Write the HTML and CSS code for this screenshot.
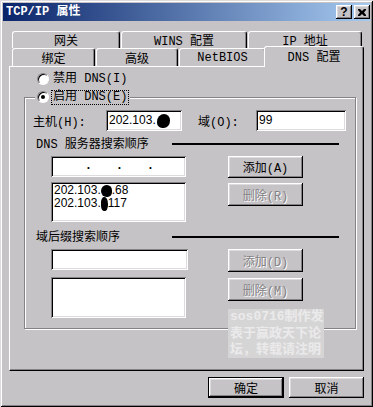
FILE: index.html
```html
<!DOCTYPE html>
<html lang="zh-CN">
<head>
    <meta charset="UTF-8">
    <title>TCP/IP 属性</title>
    <link rel="stylesheet" href="styles.css">
</head>
<body>
    <div class="dialog">
        <div class="titlebar">
            <span class="title">TCP/IP 属性</span>
            <div class="caption-btns">
                <span class="cap-btn">?</span>
                <span class="cap-btn">
                    <svg width="8" height="7" viewBox="0 0 8 7"><path d="M0 0h2l2 2 2-2h2v1l-2 2.5 2 2.5v1h-2l-2-2-2 2h-2v-1l2-2.5-2-2.5z" fill="#000"/></svg>
                </span>
            </div>
        </div>

        <div class="tabs">
            <div class="tab-row">
                <div class="tab w-gw">网关</div>
                <div class="tab w-wins">WINS 配置</div>
                <div class="tab w-ip">IP 地址</div>
            </div>
            <div class="tab-row front">
                <div class="tab w-bind">绑定</div>
                <div class="tab w-adv">高级</div>
                <div class="tab w-nb">NetBIOS</div>
                <div class="tab selected">DNS 配置</div>
            </div>
        </div>

        <div class="panel">
            <div class="radio-row first">
                <span class="radio"></span>
                <span class="radio-text">禁用 DNS(I)</span>
            </div>

            <fieldset class="group">
                <legend class="radio-row">
                    <span class="radio checked"></span>
                    <span class="radio-text focus">启用 DNS(E)</span>
                </legend>

                <div class="host-row">
                    <span class="lbl-host">主机(H):</span>
                    <div class="field w-host">202.103.<span class="blob big"></span></div>
                    <span class="lbl-domain">域(O):</span>
                    <div class="field w-domain">99</div>
                </div>

                <div class="section-head">
                    <span class="head-text">DNS 服务器搜索顺序</span>
                    <span class="rule"></span>
                </div>
                <div class="order-row">
                    <div class="order-col">
                        <div class="field ip-field"><span>.</span><span>.</span><span>.</span></div>
                        <div class="field listbox">
                            <div>202.103.<span class="blob b1"></span>.68</div>
                            <div>202.103.<span class="blob b2"></span>117</div>
                        </div>
                    </div>
                    <div class="btn-col">
                        <div class="btn h22">添加(A)</div>
                        <div class="btn h23 disabled">删除(R)</div>
                    </div>
                </div>

                <div class="section-head second">
                    <span class="head-text">域后缀搜索顺序</span>
                    <span class="rule"></span>
                </div>
                <div class="order-row suffix">
                    <div class="order-col">
                        <div class="field suffix-field"></div>
                        <div class="field listbox tall"></div>
                    </div>
                    <div class="btn-col">
                        <div class="btn h23 disabled">添加(D)</div>
                        <div class="btn h23 disabled">删除(M)</div>
                    </div>
                </div>
            </fieldset>

            <!-- watermark stamped over the dialog -->
            <div class="watermark">sos0716制作发<br>表于赢政天下论<br>坛，转载请注明</div>
        </div>

        <div class="footer">
            <div class="btn default">确定</div>
            <div class="btn cancel">取消</div>
        </div>
    </div>
</body>
</html>
```

FILE: styles.css
```css
* {
    box-sizing: border-box;
}
body {
    margin: 0;
    background: #c6c3c6;
    font-family: "Liberation Mono", "Noto Sans CJK SC", monospace;
    font-size: 12px;
    color: #000;
}
.dialog {
    width: 373px;
    height: 407px;
    padding: 3px;
    background: #c6c3c6;
    box-shadow: inset 1px 1px #dedbde, inset -1px -1px #000, inset 2px 2px #fff, inset -2px -2px #848284;
}

/* title bar */
.titlebar {
    height: 18px;
    display: flex;
    align-items: center;
    justify-content: space-between;
    padding-left: 3px;
    background: linear-gradient(to right, #0a246a, #a6caf0);
}
.title {
    color: #fff;
    font-weight: bold;
    line-height: 18px;
}
.caption-btns {
    display: flex;
    gap: 2px;
}
.cap-btn {
    width: 16px;
    height: 14px;
    display: flex;
    align-items: center;
    justify-content: center;
    background: #c6c3c6;
    font-family: "Liberation Sans", sans-serif;
    font-weight: bold;
    font-size: 12px;
    line-height: 14px;
    box-shadow: inset -1px -1px #000, inset 1px 1px #fff, inset -2px -2px #848284, inset 2px 2px #dedbde;
}

/* tabs */
.tabs {
    margin: 10px 0 0 9px;
}
.tab-row {
    display: flex;
    gap: 1px;
    height: 17px;
}
.tab-row.front {
    height: 18px;
}
.tab {
    height: 17px;
    display: flex;
    align-items: center;
    justify-content: center;
    background: #c6c3c6;
    border-top: 1px solid #fff;
    border-left: 1px solid #fff;
    border-right: 1px solid #000;
    border-radius: 3px 3px 0 0;
    box-shadow: inset -1px 0 #848284;
}
.front .tab {
    height: 18px;
}
.w-gw { width: 108px; }
.w-wins { width: 126px; }
.w-ip { width: 114px; }
.w-bind { width: 83px; }
.w-adv { width: 82px; }
.w-nb { width: 87px; }
.front .tab.selected {
    position: relative;
    z-index: 1;
    width: 100px;
    height: 21px;
    margin: -2px 0 0 -3px;
    padding-bottom: 3px;
}

/* page panel */
.panel {
    position: relative;
    width: 355px;
    height: 305px;
    margin-left: 6px;
    border-top: 1px solid #fff;
    border-left: 1px solid #fff;
    border-right: 1px solid #000;
    border-bottom: 1px solid #000;
    box-shadow: inset -1px -1px #848284;
}
.radio-row {
    display: flex;
    align-items: center;
    height: 14px;
}
.radio-row.first {
    margin: 5px 0 0 27px;
}
.radio {
    position: relative;
    width: 12px;
    height: 12px;
    border-radius: 50%;
    background: #fff;
    border: 1px solid;
    border-color: #848284 #fff #fff #848284;
    box-shadow: inset 1px 1px #000;
}
.radio.checked::after {
    content: "";
    position: absolute;
    left: 3px;
    top: 3px;
    width: 4px;
    height: 4px;
    border-radius: 50%;
    background: #000;
}
.radio-text {
    margin-left: 4px;
    line-height: 13px;
}
.focus {
    outline: 1px dotted #000;
    padding: 0 1px;
    margin-left: 3px;
}

/* group box */
.group {
    width: 332px;
    margin: 4px 0 0 14px;
    padding: 0 0 10px;
    border: 1px solid #848284;
    box-shadow: inset 1px 1px #fff, 1px 1px #fff;
}
.group legend {
    margin-left: 10px;
    padding: 0 2px;
    background: #c6c3c6;
}
.host-row {
    display: flex;
    align-items: center;
    margin-top: 6px;
    padding-left: 8px;
}
.lbl-host { width: 73px; }
.lbl-domain {
    width: 58px;
    margin-left: 16px;
}
.field {
    background: #fff;
    height: 21px;
    padding: 3px 2px 0 3px;
    font-family: "Liberation Sans", sans-serif;
    font-size: 12px;
    line-height: 14px;
    box-shadow: inset 1px 1px #848284, inset -1px -1px #fff, inset 2px 2px #000, inset -2px -2px #dedbde;
}
.w-host { width: 76px; }
.w-domain { width: 90px; }
.blob {
    display: inline-block;
    background: #000;
    vertical-align: middle;
}
.blob.big {
    width: 13px;
    height: 14px;
    border-radius: 55% 45% 50% 40%;
    margin-left: 1px;
}
.blob.b1 {
    width: 11px;
    height: 12px;
    border-radius: 50% 45% 40% 50%;
}
.blob.b2 {
    width: 7px;
    height: 14px;
    border-radius: 40% 50% 45% 40%;
}

.section-head {
    display: flex;
    align-items: center;
    height: 14px;
    margin-top: 5px;
    padding-left: 11px;
}
.section-head.second {
    margin-top: 7px;
}
.head-text { width: 136px; }
.rule {
    width: 167px;
    height: 2px;
    background: #000;
    margin-top: 2px;
}

.order-row {
    display: flex;
    margin-top: 6px;
    padding-left: 26px;
}
.order-row.suffix {
    margin-top: 6px;
}
.order-col {
    width: 135px;
    display: flex;
    flex-direction: column;
    gap: 5px;
}
.suffix .order-col {
    gap: 7px;
}
.ip-field {
    display: flex;
    justify-content: space-around;
    padding: 2px 20px 0 22px;
    font-weight: bold;
}
.suffix-field {
    width: 137px;
}
.listbox {
    height: 40px;
    padding: 2px 3px;
    line-height: 13px;
}
.listbox.tall {
    height: 41px;
}
.btn-col {
    width: 75px;
    margin-left: 42px;
    display: flex;
    flex-direction: column;
    gap: 5px;
}
.suffix .btn-col {
    gap: 6px;
}

/* push buttons */
.btn {
    display: flex;
    align-items: center;
    justify-content: center;
    height: 21px;
    background: #c6c3c6;
    box-shadow: inset -1px -1px #000, inset 1px 1px #fff, inset -2px -2px #848284, inset 2px 2px #dedbde;
}
.btn.h22 { height: 22px; }
.btn.h23 { height: 23px; }
.btn.disabled {
    color: #848284;
    text-shadow: 1px 1px #fff;
}
.footer {
    display: flex;
    justify-content: flex-end;
    gap: 5px;
    margin: 6px 6px 0 0;
}
.btn.default {
    width: 76px;
    border: 1px solid #000;
}
.btn.cancel {
    width: 75px;
}

.watermark {
    position: absolute;
    left: 218px;
    top: 242px;
    width: 96px;
    height: 49px;
    padding: 0 0 0 2px;
    background: #d6d5d6;
    color: #ebeaeb;
    font-size: 13px;
    font-weight: bold;
    line-height: 16.5px;
    white-space: nowrap;
}
```
